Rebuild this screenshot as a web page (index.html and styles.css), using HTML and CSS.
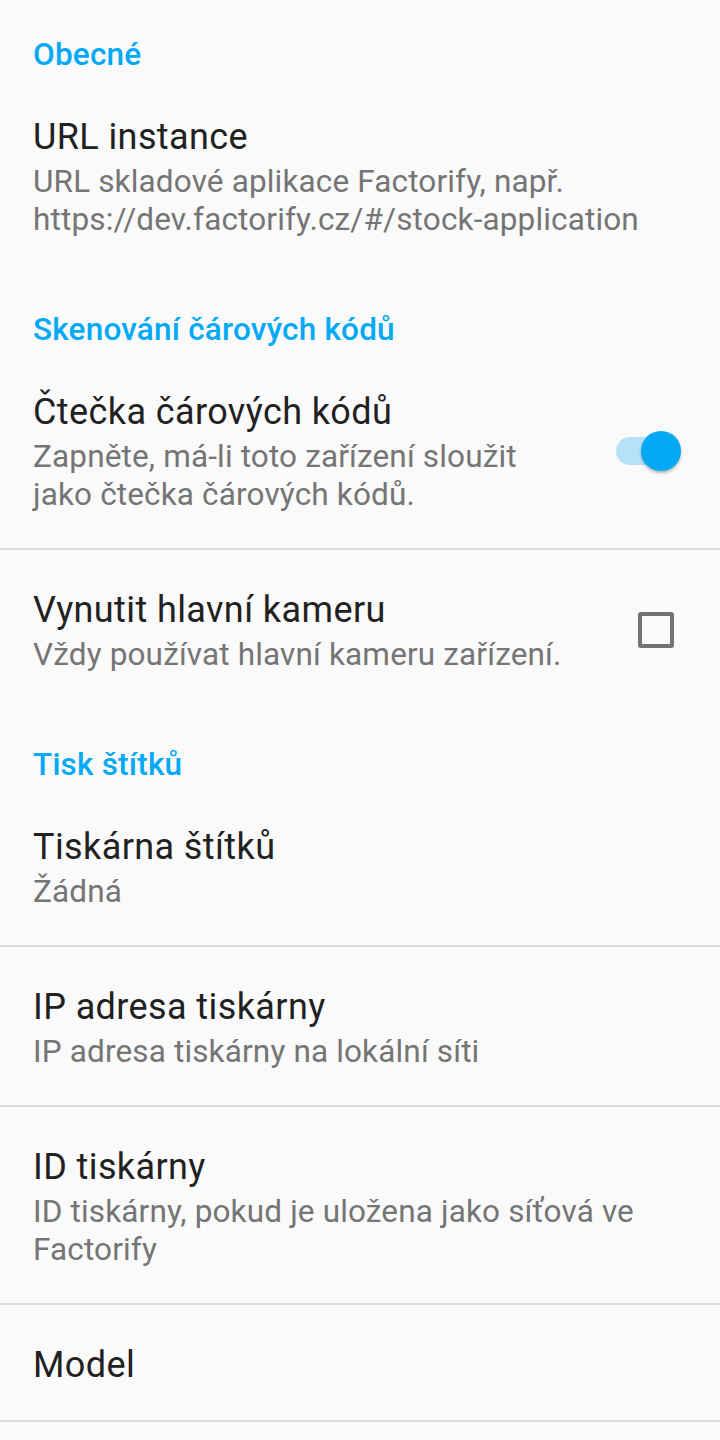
FILE: index.html
```html
<!DOCTYPE html>
<html lang="cs">
<head>
<meta charset="utf-8">
<title>Nastavení</title>
<link rel="stylesheet" href="styles.css">
</head>
<body>
<main class="prefs">
  <div class="category first">Obecné</div>
  <div class="pref">
    <div class="pref-text">
      <div class="pref-title">URL instance</div>
      <div class="pref-summary">URL skladové aplikace Factorify, např. https://dev.factorify.cz/#/stock-application</div>
    </div>
  </div>

  <div class="category">Skenování čárových kódů</div>
  <div class="pref pref-switch">
    <div class="pref-text">
      <div class="pref-title">Čtečka čárových kódů</div>
      <div class="pref-summary">Zapněte, má-li toto zařízení sloužit jako čtečka čárových kódů.</div>
    </div>
    <div class="widget">
      <div class="switch"><span class="track"></span><span class="thumb"></span></div>
    </div>
  </div>
  <div class="divider"></div>
  <div class="pref">
    <div class="pref-text">
      <div class="pref-title">Vynutit hlavní kameru</div>
      <div class="pref-summary">Vždy používat hlavní kameru zařízení.</div>
    </div>
    <div class="widget">
      <span class="checkbox"></span>
    </div>
  </div>

  <div class="category">Tisk štítků</div>
  <div class="pref">
    <div class="pref-text">
      <div class="pref-title">Tiskárna štítků</div>
      <div class="pref-summary">Žádná</div>
    </div>
  </div>
  <div class="divider"></div>
  <div class="pref">
    <div class="pref-text">
      <div class="pref-title">IP adresa tiskárny</div>
      <div class="pref-summary">IP adresa tiskárny na lokální síti</div>
    </div>
  </div>
  <div class="divider"></div>
  <div class="pref">
    <div class="pref-text">
      <div class="pref-title">ID tiskárny</div>
      <div class="pref-summary">ID tiskárny, pokud je uložena jako síťová ve Factorify</div>
    </div>
  </div>
  <div class="divider"></div>
  <div class="pref pref-single">
    <div class="pref-text">
      <div class="pref-title">Model</div>
    </div>
  </div>
  <div class="divider"></div>
</main>
</body>
</html>
```

FILE: styles.css
```css
html, body {
  margin: 0;
  padding: 0;
  background: #fafafa;
}

body {
  font-family: Roboto, "Noto Sans", "Liberation Sans", sans-serif;
  width: 720px;
  min-height: 1440px;
}

.prefs {
  display: flex;
  flex-direction: column;
}

.category {
  padding: 38px 36px 3px 33px;
  font-size: 31.5px;
  line-height: 38px;
  font-weight: 500;
  letter-spacing: 0.2px;
  color: #03a9f4;
}

.category.first {
  padding-top: 36px;
}

.pref {
  display: flex;
  align-items: center;
  padding: 36px 39px 34px 33px;
}

.pref-single {
  padding-bottom: 31px;
}

.pref-text {
  flex: 1;
  min-width: 0;
}

.pref-title {
  font-size: 36px;
  line-height: 48px;
  letter-spacing: 0.4px;
  color: #212121;
}

.pref-summary {
  margin-top: 2px;
  font-size: 31.5px;
  line-height: 38px;
  letter-spacing: 0.15px;
  color: #757575;
}

.widget {
  flex: none;
  display: flex;
  justify-content: flex-end;
  align-items: center;
  padding-left: 50px;
}

.switch {
  position: relative;
  width: 65px;
  height: 40px;
}

.switch .track {
  position: absolute;
  left: 0;
  top: 6px;
  width: 58px;
  height: 28px;
  border-radius: 14px;
  background: #b5e2f9;
}

.switch .thumb {
  position: absolute;
  right: 0;
  top: 0;
  width: 40px;
  height: 40px;
  border-radius: 50%;
  background: #03a9f4;
  box-shadow: 0 2px 3px rgba(0, 0, 0, 0.28);
}

.checkbox {
  display: block;
  box-sizing: border-box;
  width: 36px;
  height: 36px;
  margin-right: 7px;
  border: 4px solid #737373;
  border-radius: 3px;
}

.divider {
  height: 2px;
  background: #dcdcdc;
}
```
